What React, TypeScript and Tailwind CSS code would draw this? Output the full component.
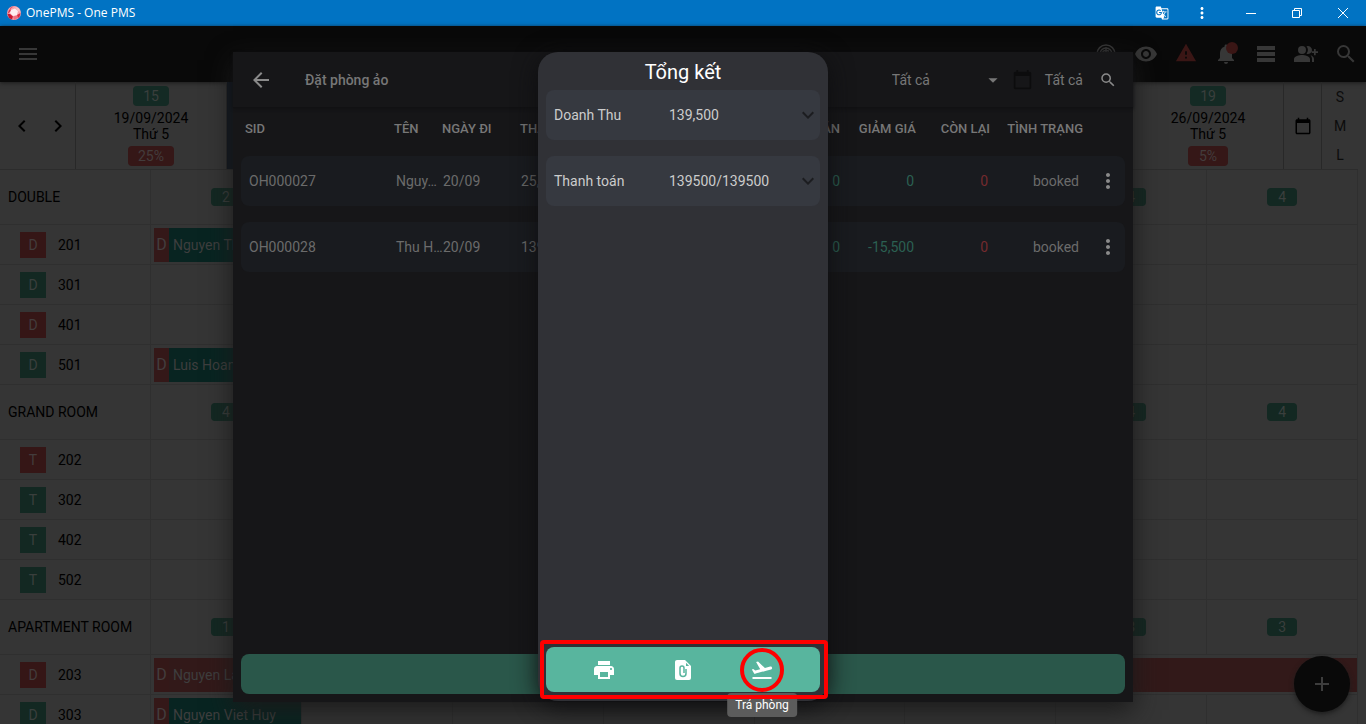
import { clsx } from "clsx";
import {
  MdAdd,
  MdArrowBack,
  MdArrowDropDown,
  MdCalendarToday,
  MdFlightTakeoff,
  MdGTranslate,
  MdKeyboardArrowDown,
  MdKeyboardArrowLeft,
  MdKeyboardArrowRight,
  MdMenu,
  MdMoreVert,
  MdNotifications,
  MdPrint,
  MdSearch,
  MdVisibility,
  MdWarning,
} from "react-icons/md";

type Booking = { guest: string; span: number; full?: boolean };
type Room = { no: string; type: string; dirty?: boolean; booking?: Booking };
type Group = { name: string; free: number[]; rooms: Room[] };

const days = [
  { date: "19/09/2024", day: "Thứ 5", free: 15, rate: "25%" },
  { date: "20/09/2024", day: "Thứ 6", free: 17, rate: "15%", today: true },
  { date: "21/09/2024", day: "Thứ 7", free: 19, rate: "5%" },
  { date: "22/09/2024", day: "CN", free: 19, rate: "5%" },
  { date: "23/09/2024", day: "Thứ 2", free: 19, rate: "5%" },
  { date: "24/09/2024", day: "Thứ 3", free: 19, rate: "5%" },
  { date: "25/09/2024", day: "Thứ 4", free: 19, rate: "5%" },
  { date: "26/09/2024", day: "Thứ 5", free: 19, rate: "5%" },
];

const groups: Group[] = [
  {
    name: "DOUBLE",
    free: [2, 4, 4, 4, 4, 4, 4, 4],
    rooms: [
      { no: "201", type: "D", dirty: true, booking: { guest: "Nguyen Thi", span: 1 } },
      { no: "301", type: "D" },
      { no: "401", type: "D", dirty: true },
      { no: "501", type: "D", booking: { guest: "Luis Hoang", span: 1 } },
    ],
  },
  {
    name: "GRAND ROOM",
    free: [4, 4, 4, 4, 4, 4, 4, 4],
    rooms: [
      { no: "202", type: "T", dirty: true },
      { no: "302", type: "T" },
      { no: "402", type: "T" },
      { no: "502", type: "T" },
    ],
  },
  {
    name: "APARTMENT ROOM",
    free: [1, 3, 3, 3, 3, 3, 3, 3],
    rooms: [
      { no: "203", type: "D", dirty: true, booking: { guest: "Nguyen Lan", span: 8, full: true } },
      { no: "303", type: "D", booking: { guest: "Nguyen Viet Huy", span: 1 } },
    ],
  },
];

const orders = [
  { sid: "OH000027", name: "Nguy…", out: "20/09", total: "25,000", paid: "0", discount: "0", left: "0" },
  { sid: "OH000028", name: "Thu H…", out: "20/09", total: "139,500", paid: "0", discount: "-15,500", left: "0" },
];

const summary = [
  { label: "Doanh Thu", value: "139,500" },
  { label: "Thanh toán", value: "139500/139500" },
];

function GemLogo() {
  return (
    <svg viewBox="0 0 16 16" className="size-4">
      <circle cx="8" cy="8" r="7" fill="#f7a3ad" />
      <path d="M8 1 4 3 5 6 1.5 9 3 5z" fill="#e0364c" />
      <path d="M5 5 9 3.500 12 6 11 10 7 11 4 8z" fill="#fdeef0" />
      <path d="M1.500 9 4 9 7 11.500 6 14.500 3 13z" fill="#c9182f" />
      <path d="M7 11.500 11 10.500 12 13 8 15z" fill="#ee6f80" />
      <path d="M11 10 14.500 8 13.500 12 12 13z" fill="#d92d43" />
      <path d="M9 1.500 13 3.500 14.500 7 12 6z" fill="#f9c4ca" />
    </svg>
  );
}

function TitleBar() {
  return (
    <header className="flex h-[26px] shrink-0 items-center bg-[#0173c3] pl-1.5 text-white">
      <GemLogo />
      <h1 className="ml-1 flex-1 font-['Open_Sans',sans-serif] text-xs">OnePMS - One PMS</h1>
      <button aria-label="Dịch" className="flex w-10 justify-center">
        <MdGTranslate size={14} />
      </button>
      <button aria-label="Tùy chọn" className="flex w-10 justify-center">
        <MdMoreVert size={18} />
      </button>
      <button aria-label="Thu nhỏ" className="ml-1.5 flex w-[46px] justify-center">
        <svg viewBox="0 0 10 10" className="size-2.5" stroke="currentColor">
          <path d="M0 5.500h10" />
        </svg>
      </button>
      <button aria-label="Khôi phục" className="flex w-[46px] justify-center">
        <svg viewBox="0 0 10 10" className="size-2.5" stroke="currentColor" fill="none">
          <path d="M.5 2.500h7v7h-7zM2.500 2.500v-2h7v7h-2" />
        </svg>
      </button>
      <button aria-label="Đóng" className="flex w-[46px] justify-center">
        <svg viewBox="0 0 10 10" className="size-2.5" stroke="currentColor">
          <path d="M0 0l10 10M10 0L0 10" />
        </svg>
      </button>
    </header>
  );
}

function AppBar() {
  return (
    <nav className="flex h-14 shrink-0 items-center bg-[#090909] pl-4 text-[#373737] shadow-[0_1px_4px_#1c1c1c]">
      <button aria-label="Menu">
        <MdMenu size={24} />
      </button>
      <div className="ml-auto flex">
        <button aria-label="Doanh thu" className="flex w-10 justify-center">
          <svg viewBox="0 0 24 24" className="size-6" fill="none" stroke="currentColor" strokeWidth="1.500">
            <circle cx="12" cy="12" r="9" />
            <circle cx="12" cy="12" r="6" />
            <path d="M12 5.500v13M15 9.500c-1-1.500-6-1.500-6 .5s6 2 6 4-5 2-6 .5" />
          </svg>
        </button>
        <button aria-label="Xem" className="flex w-10 justify-center">
          <MdVisibility size={24} />
        </button>
        <button aria-label="Cảnh báo" className="flex w-10 justify-center text-[#3a1615]">
          <MdWarning size={22} />
        </button>
        <button aria-label="Thông báo" className="relative flex w-10 justify-center">
          <MdNotifications size={24} />
          <span className="absolute right-2 top-0 size-3 rounded-full bg-[#3a1615]" />
        </button>
        <button aria-label="Danh sách" className="flex w-10 justify-center">
          <svg viewBox="0 0 24 24" className="size-6" fill="currentColor">
            <path d="M3 4h18v4H3zM3 10h18v4H3zM3 16h18v4H3z" />
          </svg>
        </button>
        <button aria-label="Thêm khách" className="flex w-10 justify-center">
          <svg viewBox="0 0 24 24" className="size-6" fill="currentColor">
            <circle cx="8" cy="8" r="4" />
            <path d="M0 20v-3c0-2.700 5.300-4 8-4s8 1.300 8 4v3zM12.500 4.300a4 4 0 1 1 0 7.400 6 6 0 0 0 0-7.400zM16.500 13.300c2 .7 3.500 1.900 3.500 3.700v3h-2v-3c0-1.500-.6-2.700-1.500-3.700zM20 7h1.700v2.200H24V11h-2.300v2.200H20V11h-2.200V9.200H20z" />
          </svg>
        </button>
        <button aria-label="Tìm kiếm" className="flex w-10 justify-center">
          <MdSearch size={24} />
        </button>
      </div>
    </nav>
  );
}

function CalendarHeader() {
  return (
    <div className="flex h-[88px] shrink-0 border-b border-[#2c2c2c] text-black">
      <div className="flex w-[75px] items-center justify-center gap-3 pl-1">
        <button aria-label="Trước">
          <MdKeyboardArrowLeft size={24} />
        </button>
        <button aria-label="Sau">
          <MdKeyboardArrowRight size={24} />
        </button>
      </div>
      {days.map((d) => (
        <div
          key={d.date}
          className={clsx(
            "flex flex-1 flex-col items-center border-l border-[#282828] pt-1 text-sm leading-4",
            d.today && "bg-[#10161f]"
          )}
        >
          <span className="w-9 rounded bg-[#142a24] text-center leading-5 text-[#3a3f3d]">{d.free}</span>
          <span className="mt-1">{d.date}</span>
          <span>{d.day}</span>
          <span className="mt-1 min-w-10 rounded bg-[#351717] px-2.5 text-center leading-5 text-[#433c3c]">
            {d.rate}
          </span>
        </div>
      ))}
      <button aria-label="Chọn ngày" className="flex w-[38px] items-center justify-center border-l border-[#282828]">
        <MdCalendarToday size={18} />
      </button>
      <div className="flex w-[37px] flex-col items-center justify-around border-l border-[#282828] text-sm text-[#0c0c0c]">
        <button>S</button>
        <button>M</button>
        <button>L</button>
      </div>
    </div>
  );
}

function RoomRow({ room }: { room: Room }) {
  const { booking } = room;
  const rest = days.length - (booking?.span ?? 0);
  return (
    <tr className="h-10">
      <th className="border-b border-r border-[#2f2f2f] p-0 font-normal">
        <div className="flex items-center gap-3 pl-5">
          <span
            className={clsx(
              "flex size-[26px] items-center justify-center",
              room.dirty ? "bg-[#351616] text-[#433c3c]" : "bg-[#132822] text-[#3a3f3d]"
            )}
          >
            {room.type}
          </span>
          {room.no}
        </div>
      </th>
      {booking && (
        <td colSpan={booking.span} className="border-b border-r border-[#2f2f2f] p-0">
          <div
            className={clsx(
              "ml-[3px] flex h-[34px] items-center overflow-hidden whitespace-nowrap text-[#3e3e3e]",
              booking.full ? "bg-[#321919]" : "bg-[#082421]"
            )}
          >
            <span className="flex h-full w-[15px] items-center justify-center bg-[#341818] text-base text-[#433e3e]">
              D
            </span>
            <span className="ml-1">{booking.guest}</span>
          </div>
        </td>
      )}
      {Array.from({ length: rest }, (_, i) => (
        <td key={i} className="border-b border-r border-[#2f2f2f]" />
      ))}
    </tr>
  );
}

function Calendar() {
  return (
    <div className="min-h-0 flex-1 overflow-hidden pr-2">
      <CalendarHeader />
      <table className="w-full table-fixed border-separate border-spacing-0 text-left text-sm text-black">
        <colgroup>
          <col className="w-[151px]" />
          {days.map((d) => (
            <col key={d.date} />
          ))}
        </colgroup>
        {groups.map((g) => (
          <tbody key={g.name}>
            <tr className="h-[55px]">
              <th className="border-b border-r border-[#2f2f2f] p-0 pl-2 font-normal">{g.name}</th>
              {g.free.map((n, i) => (
                <td key={i} className="border-b border-r border-[#2f2f2f] p-0">
                  <span className="mx-auto block w-[30px] rounded bg-[#132822] text-center leading-[18px] text-[#3a3f3d]">
                    {n}
                  </span>
                </td>
              ))}
            </tr>
            {g.rooms.map((r) => (
              <RoomRow key={r.no} room={r} />
            ))}
          </tbody>
        ))}
      </table>
    </div>
  );
}

function OrdersDialog() {
  return (
    <section className="col-start-1 row-start-1 flex h-[650px] w-[900px] flex-col bg-[#161618] text-sm text-[#777] shadow-[0_8px_24px_#1a1a1a]">
      <div className="flex h-14 shrink-0 items-center border-b border-[#111113] px-4 font-medium shadow-[0_1px_3px_#111113]">
        <button aria-label="Quay lại" className="text-[#8a8a8a]">
          <MdArrowBack size={24} />
        </button>
        <h2 className="ml-8">Đặt phòng ảo</h2>
        <label className="ml-auto flex items-center">
          <select aria-label="Trạng thái" className="w-[90px] appearance-none bg-transparent font-normal">
            <option>Tất cả</option>
          </select>
          <MdArrowDropDown size={22} />
        </label>
        <button className="ml-2 flex items-center gap-3 font-normal">
          <MdCalendarToday size={21} className="text-[#0c0c0d]" />
          Tất cả
        </button>
        <button aria-label="Tìm kiếm" className="ml-4 text-[#8a8a8a]">
          <MdSearch size={18} />
        </button>
      </div>
      <table className="block flex-1 px-2 text-left">
        <thead className="block">
          <tr className="grid h-12 grid-cols-[149px_48px_78px_1fr_1fr_76px_74px_93px_42px] whitespace-nowrap pl-1 pt-3 text-[13px]">
            <th className="font-medium">SID</th>
            <th className="font-medium">TÊN</th>
            <th className="font-medium">NGÀY ĐI</th>
            <th className="font-medium">THÀNH TIỀN</th>
            <th className="text-right font-medium">THANH TOÁN</th>
            <th className="text-right font-medium">GIẢM GIÁ</th>
            <th className="text-right font-medium">CÒN LẠI</th>
            <th className="text-right font-medium">TÌNH TRẠNG</th>
          </tr>
        </thead>
        <tbody className="flex flex-col gap-4">
          {orders.map((o) => (
            <tr
              key={o.sid}
              className="grid h-[50px] grid-cols-[147px_47px_78px_1fr_1fr_74px_74px_91px_46px] items-center rounded-lg bg-[#191b1f] pl-2 text-[#6b6b6b]"
            >
              <td>{o.sid}</td>
              <td className="whitespace-nowrap">{o.name}</td>
              <td>{o.out}</td>
              <td>{o.total}</td>
              <td className="text-right text-[#2b6052]">{o.paid}</td>
              <td className="text-right text-[#2b6052]">{o.discount}</td>
              <td className="text-right text-[#742a2e]">{o.left}</td>
              <td className="text-right">booked</td>
              <td>
                <button aria-label="Thao tác" className="ml-auto flex w-[34px] justify-center text-[#8a8a8a]">
                  <MdMoreVert size={24} />
                </button>
              </td>
            </tr>
          ))}
        </tbody>
      </table>
      <button aria-label="Thêm đặt phòng" className="m-2 h-10 rounded-lg bg-[#2a574a]" />
    </section>
  );
}

function SummaryPanel() {
  return (
    <section className="z-10 col-start-1 row-start-1 flex h-[649px] w-[290px] flex-col justify-self-center rounded-[20px] bg-[#303136] px-2 pb-[9px] shadow-[0_4px_24px_#0e0e10]">
      <h2 className="pb-1 pt-1.5 text-center text-xl leading-7 text-white">Tổng kết</h2>
      <div className="flex flex-1 flex-col gap-4">
        {summary.map((s) => (
          <button
            key={s.label}
            className="flex h-[50px] items-center rounded-lg bg-[#363940] pl-2 text-left text-sm text-[#ccc]"
          >
            <span className="w-[115px]">{s.label}</span>
            <span className="flex-1">{s.value}</span>
            <MdKeyboardArrowDown size={24} className="text-[#1c1d20]" />
          </button>
        ))}
      </div>
      <div className="relative flex h-[45px] items-center justify-center gap-[55px] rounded-lg bg-[#58b59e] text-white">
        <button aria-label="In">
          <MdPrint size={24} />
        </button>
        <button aria-label="Đính kèm">
          <svg viewBox="0 0 24 24" className="size-6">
            <path d="M6 2h8l6 6v12a2 2 0 0 1-2 2H6a2 2 0 0 1-2-2V4c0-1.100.9-2 2-2z" fill="currentColor" />
            <path d="M15 4.800v3.200h3.200z" fill="#58b59e" />
            <path d="M15 11v4.500a3 3 0 0 1-6 0V10a2 2 0 0 1 4 0v5" fill="none" stroke="#58b59e" strokeWidth="1.500" />
          </svg>
        </button>
        <button aria-label="Trả phòng" className="relative">
          <MdFlightTakeoff size={24} />
          <span className="absolute -inset-2.5 rounded-full border-4 border-[#fe0000]" />
          <span className="absolute left-1/2 top-[35px] -translate-x-1/2 whitespace-nowrap rounded bg-[#5c5c5c] px-2 text-xs leading-6">
            Trả phòng
          </span>
        </button>
        <span className="absolute -inset-y-[7px] -left-1.5 -right-2 rounded-sm border-4 border-[#fe0000]" />
      </div>
    </section>
  );
}

export default function App() {
  return (
    <div className="relative flex h-screen flex-col overflow-hidden bg-[#353535] font-[Roboto,sans-serif]">
      <TitleBar />
      <AppBar />
      <Calendar />
      <button
        aria-label="Thêm"
        className="absolute bottom-3 right-4 flex size-14 items-center justify-center rounded-full bg-[#090909] text-[#3d3d3d] shadow-[0_2px_5px_#1c1c1c]"
      >
        <MdAdd size={24} />
      </button>
      <div className="absolute inset-x-0 top-[52px] grid justify-center">
        <OrdersDialog />
        <SummaryPanel />
      </div>
    </div>
  );
}
